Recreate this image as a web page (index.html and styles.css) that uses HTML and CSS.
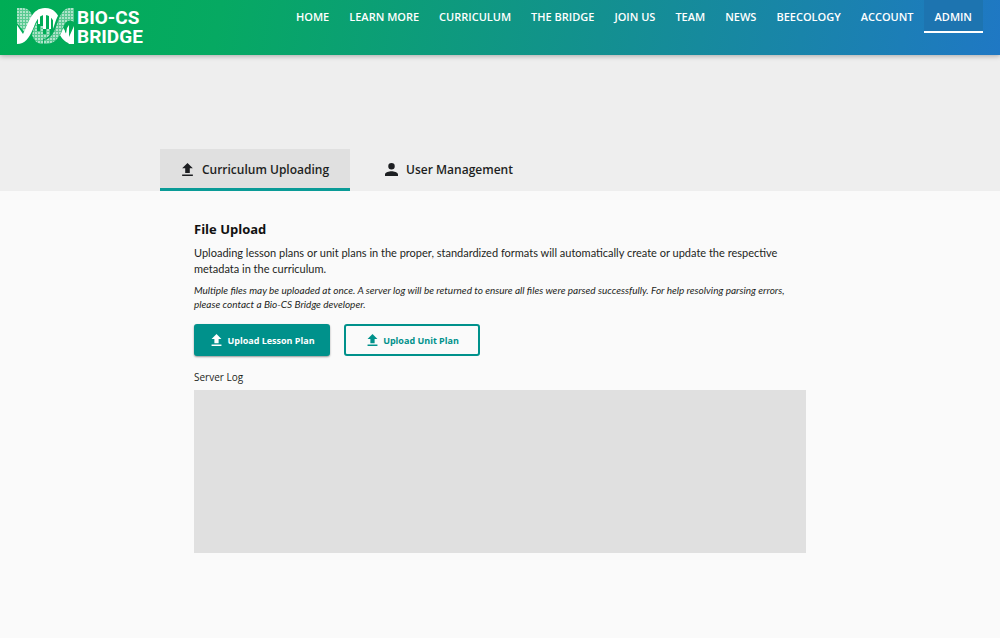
FILE: index.html
```html
<!DOCTYPE html>
<html lang="en">
<head>
<meta charset="utf-8">
<meta name="viewport" content="width=device-width, initial-scale=1">
<title>Bio-CS Bridge Admin</title>
<link rel="stylesheet" href="styles.css">
</head>
<body>
<svg class="defs" aria-hidden="true">
  <symbol id="upload" viewBox="5 3 14 17"><path d="M9 16h6v-6h4l-7-7-7 7h4zm-4 2h14v2H5z"/></symbol>
  <symbol id="person" viewBox="4 4 16 16"><path d="M12 12a4 4 0 1 0 0-8 4 4 0 0 0 0 8zm0 2c-2.700 0-8 1.300-8 4v2h16v-2c0-2.700-5.300-4-8-4z"/></symbol>
</svg>
<header class="topbar">
  <a class="brand" href="#">
    <svg class="helix" viewBox="0 0 57 36" aria-hidden="true">
      <defs>
        <pattern id="grain" width="3" height="3" patternUnits="userSpaceOnUse">
          <rect width="3" height="3" fill="#fff" opacity=".35"/>
          <rect width="2" height="2" fill="#fff" opacity=".5"/>
        </pattern>
      </defs>
      <path d="M0 0h6c5 0 8 4 10 9L7 24 0 15z" fill="url(#grain)"/>
      <path d="M17 20l3-6v9h3v-5h3v8h3v-5h4v6l4-4-3 8c-2 3-5 5-9 5-5 0-8-4-10-9z" fill="url(#grain)"/>
      <path d="M0 17l6 9C12 14 15 0 28 0c9 0 13 6 16 14 4 11 7 17 13 18v4c-8 0-13-5-17-15-3-8-6-14-12-14-7 0-9 7-12 14-4 9-8 15-16 15z" fill="#fff"/>
      <path d="M21 7h2v9h-2zM26 5h3v16h-3zM32 7h2v14h-2zM36 11h2v10h-2z" fill="#fff"/>
      <path d="M26 31c7-1 9-7 12-16C41 6 45 0 53 0h4v16c-6-5-9-1-12 7-4 10-9 14-19 14z" fill="#05ab5b"/>
      <path d="M27 32c7-1 10-7 13-16C43 7 46 0 53 0h4v14c-6-4-9 0-12 8-4 10-8 14-18 14z" fill="url(#grain)"/>
      <path d="M46 26l2-5v9zM50 20l2-3v12l5-11v18h-5l-4-5z" fill="#fff"/>
    </svg>
    <span class="brand-name">BIO-CS<br>BRIDGE</span>
  </a>
  <nav class="nav">
    <a href="#">HOME</a>
    <a href="#">LEARN MORE</a>
    <a href="#">CURRICULUM</a>
    <a href="#">THE BRIDGE</a>
    <a href="#">JOIN US</a>
    <a href="#">TEAM</a>
    <a href="#">NEWS</a>
    <a href="#">BEECOLOGY</a>
    <a href="#">ACCOUNT</a>
    <a class="current" href="#" aria-current="page">ADMIN</a>
  </nav>
</header>
<div class="banner">
  <div class="tabs" role="tablist">
    <button class="tab selected" role="tab" aria-selected="true"><svg class="tab-icon"><use href="#upload"/></svg>Curriculum Uploading</button>
    <button class="tab" role="tab" aria-selected="false"><svg class="tab-icon"><use href="#person"/></svg>User Management</button>
  </div>
</div>
<main class="content">
  <h1 class="title">File Upload</h1>
  <p class="lead">Uploading lesson plans or unit plans in the proper, standardized formats will automatically create or update the respective metadata in the curriculum.</p>
  <p class="note">Multiple files may be uploaded at once. A server log will be returned to ensure all files were parsed successfully. For help resolving parsing errors, please contact a Bio-CS Bridge developer.</p>
  <div class="actions">
    <button class="btn primary"><svg class="btn-icon"><use href="#upload"/></svg>Upload Lesson Plan</button>
    <button class="btn outline"><svg class="btn-icon"><use href="#upload"/></svg>Upload Unit Plan</button>
  </div>
  <label class="log-label" for="log">Server Log</label>
  <textarea class="log" id="log" readonly></textarea>
</main>
</body>
</html>
```
FILE: styles.css
```css
* { box-sizing: border-box; }
body {
  margin: 0;
  min-height: 100vh;
  background: #fafafa;
  color: #1d1f22;
  font-family: "Open Sans", "Noto Sans", sans-serif;
}
button { font-family: inherit; cursor: pointer; }
svg { fill: currentColor; }
.defs { display: none; }

.topbar {
  position: relative;
  display: flex;
  justify-content: space-between;
  align-items: flex-start;
  height: 55px;
  padding: 0 17px;
  background: linear-gradient(100deg, #00ad55 0%, #06a962 22%, #139090 60%, #1f78c4 100%);
  box-shadow: 0 1px 5px rgba(0, 0, 0, .3);
}
.brand {
  display: flex;
  gap: 3px;
  padding-top: 8px;
  color: #fff;
  text-decoration: none;
}
.helix { width: 57px; height: 36px; }
.brand-name { font-family: Roboto, sans-serif; font-size: 19px; line-height: 19px; font-weight: 700; }
.nav { display: flex; }
.nav a {
  padding: 8px 10px 6px;
  border-bottom: 2px solid transparent;
  color: #fff;
  font-size: 11px;
  line-height: 17px;
  font-weight: 600;
  text-decoration: none;
  white-space: nowrap;
}
.nav .current { padding: 8px 11px 6px; background: #1d74b0; border-color: #fff; }

.banner { padding-top: 94px; background: #eee; }
.tabs { display: flex; gap: 14px; max-width: 680px; margin: 0 auto; }
.tab {
  display: flex;
  align-items: center;
  justify-content: center;
  gap: 8px;
  min-width: 190px;
  height: 42px;
  padding: 2px 20px 0;
  border: 0;
  border-bottom: 3px solid transparent;
  background: none;
  color: #1d1f22;
  font-size: 12px;
  font-weight: 600;
  white-space: nowrap;
}
.tab + .tab { min-width: 170px; }
.selected { background: #e0e0e0; border-color: #0a9b97; }
.tab-icon { width: 13px; height: 13px; }

.content {
  display: flex;
  flex-direction: column;
  max-width: 680px;
  margin: 0 auto;
  padding: 28px 34px;
}
.title { margin: 0 0 6px; font-size: 13px; line-height: 20px; font-weight: 700; color: #111; }
.lead { margin: 0 0 6px; font-family: Lato, sans-serif; font-size: 11px; line-height: 16px; }
.note { margin: 0 0 13px; font-family: Lato, sans-serif; font-size: 10px; line-height: 14px; font-style: italic; }
.actions { display: flex; gap: 14px; margin-bottom: 13px; }
.btn {
  display: flex;
  align-items: center;
  justify-content: center;
  gap: 5px;
  width: 136px;
  height: 32px;
  padding: 0 0 0 2px;
  border: 2px solid #00918b;
  border-radius: 3px;
  font-size: 9px;
  font-weight: 700;
  white-space: nowrap;
}
.primary { background: #00918b; color: #fff; box-shadow: 0 1px 2px rgba(0, 0, 0, .4); }
.outline { background: none; color: #00918b; }
.btn-icon { width: 11px; height: 12px; }
.log-label { margin-bottom: 5px; font-size: 10px; line-height: 16px; }
.log {
  width: 100%;
  height: 163px;
  border: 0;
  background: #e0e0e0;
  resize: none;
  outline: 0;
}
```
